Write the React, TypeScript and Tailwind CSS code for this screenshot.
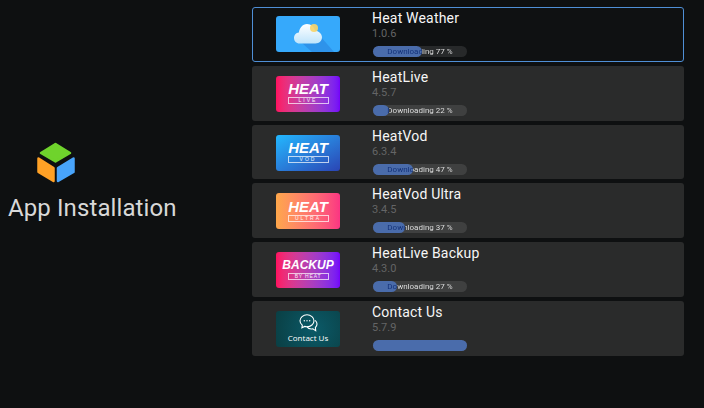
import React from "react";

type AppItem = {
  name: string;
  version: string;
  label: string;
  fill: number;
  thumb: React.ReactNode;
};

function CubeIcon() {
  return (
    <svg width="38" height="41" viewBox="0 0 38 41" className="block">
      <path d="M18.500 2 33 11 18.500 19.500 4 11Z" fill="#6fd32c" stroke="#6fd32c" strokeWidth="2.500" strokeLinejoin="round" />
      <path d="M1.500 16.500 16.500 26V39L1.500 30Z" fill="#ffa126" stroke="#ffa126" strokeWidth="2.500" strokeLinejoin="round" />
      <path d="M36.500 16.500 21 26V39L36.500 30Z" fill="#48a4fb" stroke="#48a4fb" strokeWidth="2.500" strokeLinejoin="round" />
    </svg>
  );
}

function WeatherThumb() {
  return (
    <div className="w-16 h-9 rounded-[3px] bg-[#36a9fb] overflow-hidden">
      <svg width="64" height="36" viewBox="0 0 64 36" className="block">
        <defs>
          <linearGradient id="cloud" x1="0" y1="0" x2="0" y2="1">
            <stop offset="0" stopColor="#ffffff" />
            <stop offset="1" stopColor="#bfe4fb" />
          </linearGradient>
        </defs>
        <path d="M26 27 36 36H58L45 21Z" fill="#2e93ea" />
        <path
          d="M23.500 27.500c-3.200 0-5.500-2.500-5.500-5.500 0-2.900 2.100-5.200 4.900-5.500C23.300 12.300 26.500 8 31 8c4.200 0 7.400 3 8 6.800 3.700.2 7 2.900 7 6.500 0 3.400-2.800 6.200-6.500 6.200Z"
          fill="url(#cloud)"
        />
        <circle cx="38" cy="12" r="4" fill="#f7d56a" opacity="0.92" />
      </svg>
    </div>
  );
}

function HeatThumb({
  bg,
  title,
  sub,
  small,
}: {
  bg: string;
  title: string;
  sub: string;
  small?: boolean;
}) {
  return (
    <div className={`w-16 h-9 rounded-[3px] flex flex-col items-center justify-center ${bg}`}>
      <div
        className={`text-white font-bold italic font-['Liberation_Sans',sans-serif] ${
          small ? "text-[12px] leading-[11px]" : "text-[15px] leading-[12px]"
        }`}
      >
        {title}
      </div>
      <div
        className={`mt-[2px] border border-white/70 w-[41px] h-[7px] flex items-center justify-center text-white/90 text-[5px] leading-none font-['Liberation_Sans',sans-serif] ${
          small ? "tracking-[0.8px]" : "tracking-[2px]"
        }`}
      >
        {sub}
      </div>
    </div>
  );
}

function ContactThumb() {
  return (
    <div className="w-16 h-9 rounded-[3px] bg-[radial-gradient(circle_at_60%_50%,#0b5a68,#0a3f44)] flex flex-col items-center justify-center text-white">
      <svg width="19" height="18" viewBox="0 0 19 18" fill="none" stroke="#fff" strokeWidth="1.100" className="block">
        <path d="M8 .8C4.100.8 1 3.500 1 6.800c0 1.800.9 3.400 2.300 4.500L2.900 13.800l2.800-1.400c.7.200 1.500.3 2.300.3 3.900 0 7-2.600 7-5.900S11.900.8 8 .8Z" />
        <path d="M16.200 6.400C17.300 7.400 18 8.700 18 10.100c0 1.300-.6 2.500-1.600 3.400l.3 3.100-2.900-1.800c-2.100.5-4.600-.2-6-2.100" />
        <circle cx="5.300" cy="6.800" r=".7" fill="#fff" stroke="none" />
        <circle cx="8" cy="6.800" r=".7" fill="#fff" stroke="none" />
        <circle cx="10.700" cy="6.800" r=".7" fill="#fff" stroke="none" />
      </svg>
      <div className="mt-[1px] text-[8px] leading-[10px] font-['Open_Sans',sans-serif]">Contact Us</div>
    </div>
  );
}

const apps: AppItem[] = [
  {
    name: "Heat Weather",
    version: "1.0.6",
    label: "Downloading 77 %",
    fill: 49,
    thumb: <WeatherThumb />,
  },
  {
    name: "HeatLive",
    version: "4.5.7",
    label: "Downloading 22 %",
    fill: 16,
    thumb: <HeatThumb bg="bg-gradient-to-r from-[#ff1060] to-[#7400fa]" title="HEAT" sub="LIVE" />,
  },
  {
    name: "HeatVod",
    version: "6.3.4",
    label: "Downloading 47 %",
    fill: 40,
    thumb: <HeatThumb bg="bg-gradient-to-br from-[#22b8ff] to-[#2a44b4]" title="HEAT" sub="VOD" />,
  },
  {
    name: "HeatVod Ultra",
    version: "3.4.5",
    label: "Downloading 37 %",
    fill: 32,
    thumb: <HeatThumb bg="bg-gradient-to-r from-[#fea74a] to-[#fb3482]" title="HEAT" sub="ULTRA" />,
  },
  {
    name: "HeatLive Backup",
    version: "4.3.0",
    label: "Downloading 27 %",
    fill: 24,
    thumb: <HeatThumb bg="bg-gradient-to-r from-[#ff1060] to-[#7400fa]" title="BACKUP" sub="BY HEAT" small />,
  },
  {
    name: "Contact Us",
    version: "5.7.9",
    label: "",
    fill: 94,
    thumb: <ContactThumb />,
  },
];

function ProgressBar({ label, fill }: { label: string; fill: number }) {
  return (
    <div className="relative w-[94px] h-[11px] rounded-full bg-white/10">
      <div className="absolute left-0 top-0 h-full bg-[#4a6cab] rounded-full" style={{ width: fill }} />
      {/* one text, dark over the filled part and light past it */}
      <div
        className="relative w-full h-full flex items-center justify-center text-[8px] leading-[11px] bg-clip-text text-transparent"
        style={{
          backgroundImage: `linear-gradient(to right, #123078 ${fill}px, #e8e8e8 ${fill}px)`,
        }}
      >
        {label}
      </div>
    </div>
  );
}

function AppRow({ app, selected }: { app: AppItem; selected: boolean }) {
  return (
    <div
      className={`h-[54.8px] rounded-[3px] flex ${
        selected ? "border border-[#4f8fd6] bg-[#0f1112] pl-[23px] pt-[2px]" : "bg-[#2a2b2b] pl-6 pt-[3px]"
      }`}
    >
      <div className={`flex items-center ${selected ? "h-[48px]" : "h-[50px]"}`}>{app.thumb}</div>
      <div className="ml-[32px] flex flex-col">
        <div className="text-[14px] leading-[17px] text-[#f6f6f6] tracking-[0.2px]">{app.name}</div>
        <div className="text-[11px] leading-[14px] text-[#646566]">{app.version}</div>
        <div className="mt-[5px] ml-[1px]">
          <ProgressBar label={app.label} fill={app.fill} />
        </div>
      </div>
    </div>
  );
}

export default function App() {
  return (
    <div className="w-[704px] h-[408px] bg-[#0e1011] flex font-['Roboto',sans-serif] overflow-hidden">
      <div className="w-[184px] h-[367px] flex flex-col justify-center">
        <div className="ml-[37px]">
          <CubeIcon />
        </div>
        <div className="mt-2 ml-2 text-[24px] leading-[34px] text-[#d8d8d8] tracking-[0.1px] whitespace-nowrap">
          App Installation
        </div>
      </div>
      <div className="ml-[68px] w-[432px] pt-[7px] flex flex-col gap-[4px]">
        {apps.map((app, i) => (
          <AppRow key={app.name} app={app} selected={i === 0} />
        ))}
      </div>
    </div>
  );
}
